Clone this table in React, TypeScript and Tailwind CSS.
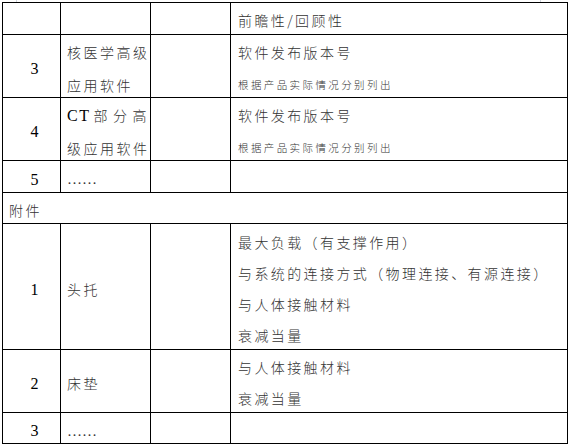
import React from "react";

const cjk = "font-['Noto_Sans_CJK_SC',sans-serif] font-light";
const serif = "font-['Liberation_Serif','Times_New_Roman',serif]";

function Cell({ children, className = "" }: { children?: React.ReactNode; className?: string }) {
  return <div className={`border-r border-b border-black flex items-center overflow-hidden ${className}`}>{children}</div>;
}

function Num({ n }: { n: string }) {
  return (
    <Cell className="justify-center pl-[6px] pt-[6px]">
      <span className={`${serif} text-[16px] text-black`}>{n}</span>
    </Cell>
  );
}

function Dots() {
  return (
    <Cell className="pl-[6px] pt-[6px]">
      <span className={`${serif} text-[15px] text-[#333]`}>……</span>
    </Cell>
  );
}

function Lines({ lines }: { lines: React.ReactNode[] }) {
  return (
    <Cell className="pl-[7px] pt-[4px]">
      <div className={`${cjk} text-[14px] tracking-[2.4px] leading-[31px] text-[#333] whitespace-nowrap`}>
        {lines.map((l, i) => (
          <div key={i}>{l}</div>
        ))}
      </div>
    </Cell>
  );
}

const note = (
  <span className="text-[10.5px] tracking-[2.4px]">根据产品实际情况分别列出</span>
);

export default function App() {
  return (
    <div className="w-[570px] h-[447px] bg-white">
      <div className="h-[2px] flex">
        <div className="ml-[16px] w-px bg-gray-300" />
        <div className="ml-[523px] w-px bg-gray-300" />
      </div>
      <div className="ml-[2px] w-[566px] grid grid-cols-[58px_90px_80px_337px] grid-rows-[32px_63px_63px_32px_31px_126px_63px_31px] border-l border-t border-black">
        {/* row 1 */}
        <Cell />
        <Cell />
        <Cell />
        <Lines lines={["前瞻性/回顾性"]} />

        {/* row 2 */}
        <Num n="3" />
        <Cell className="pl-[6px] pt-[5px]">
          <div className={`${cjk} text-[14px] tracking-[2.5px] leading-[33px] text-[#333] whitespace-nowrap`}>
            <div>核医学高级</div>
            <div>应用软件</div>
          </div>
        </Cell>
        <Cell />
        <Lines lines={["软件发布版本号", note]} />

        {/* row 3 */}
        <Num n="4" />
        <Cell className="pl-[6px] pr-[1px] pt-[5px]">
          <div className={`${cjk} w-full text-[14px] tracking-[2.5px] leading-[33px] text-[#333] whitespace-nowrap`}>
            <div className="flex justify-between">
              <span className={`${serif} font-normal text-[16px] text-black tracking-[1.5px]`}>CT</span>
              <span>部</span>
              <span>分</span>
              <span>高</span>
            </div>
            <div>级应用软件</div>
          </div>
        </Cell>
        <Cell />
        <Lines lines={["软件发布版本号", note]} />

        {/* row 4 */}
        <Num n="5" />
        <Dots />
        <Cell />
        <Cell />

        {/* 附件 */}
        <Cell className="col-span-4 pl-[6px] pt-[4px]">
          <span className={`${cjk} text-[14px] tracking-[2.5px] text-[#333]`}>附件</span>
        </Cell>

        {/* row 6 */}
        <Num n="1" />
        <Cell className="pl-[6px] pt-[5px]">
          <span className={`${cjk} text-[14px] tracking-[2.5px] text-[#333]`}>头托</span>
        </Cell>
        <Cell />
        <Lines
          lines={[
            "最大负载（有支撑作用）",
            "与系统的连接方式（物理连接、有源连接）",
            "与人体接触材料",
            "衰减当量",
          ]}
        />

        {/* row 7 */}
        <Num n="2" />
        <Cell className="pl-[6px] pt-[5px]">
          <span className={`${cjk} text-[14px] tracking-[2.5px] text-[#333]`}>床垫</span>
        </Cell>
        <Cell />
        <Lines lines={["与人体接触材料", "衰减当量"]} />

        {/* row 8 */}
        <Num n="3" />
        <Dots />
        <Cell />
        <Cell />
      </div>
    </div>
  );
}
